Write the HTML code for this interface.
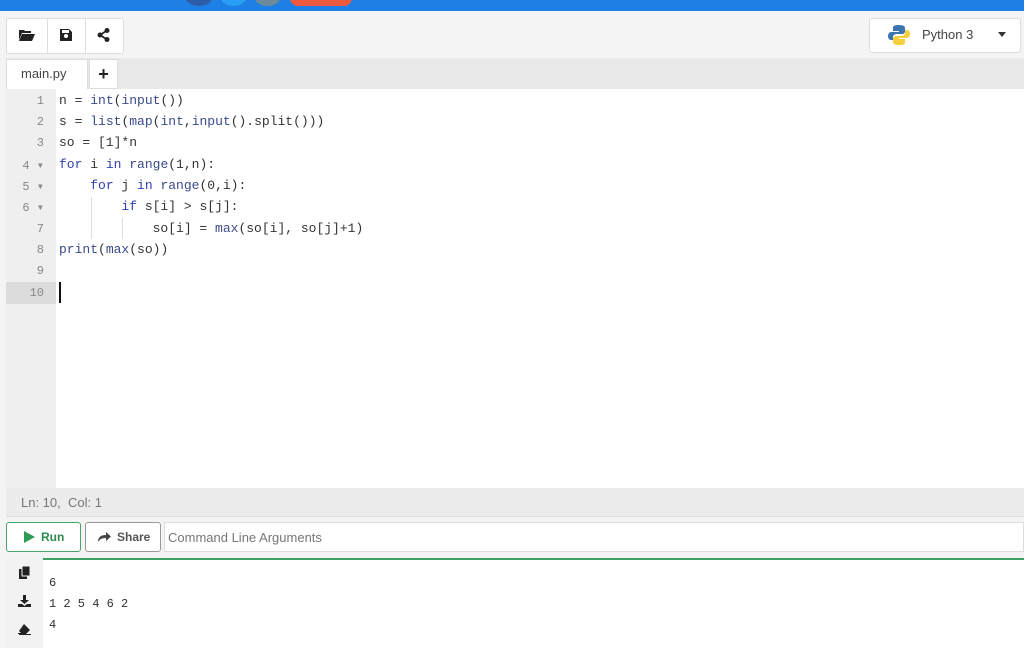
<!DOCTYPE html>
<html><head><style>
body{margin:0;width:1024px;height:648px;overflow:hidden;background:#f4f4f4;font-family:"Liberation Sans",sans-serif;position:relative}
.a{position:absolute}
.top{left:0;top:0;width:1024px;height:11px;background:#1e7fe6}
.tb{top:18px;height:34px;background:#fff;border:1px solid #ddd;border-radius:3px}
.code{font-family:"Liberation Mono",monospace;font-size:13px;color:#333}
.ln{position:absolute;left:6px;width:38px;text-align:right;font-family:"Liberation Mono",monospace;font-size:12px;color:#888}
.cl{position:absolute;left:59px;white-space:pre}
.k{color:#2f3fb0}.f{color:#3a4a8a}
</style></head><body>
<div class="a top"></div>
<div class="a" style="left:185px;top:-14px;width:28px;height:20px;border-radius:50%;background:#2d5ca8"></div>
<div class="a" style="left:220px;top:-14px;width:27px;height:20px;border-radius:50%;background:#2a9df4"></div>
<div class="a" style="left:254px;top:-14px;width:27px;height:20px;border-radius:50%;background:#6b8a9a"></div>
<div class="a" style="left:290px;top:-10px;width:62px;height:16px;border-radius:8px;background:#ee5a40"></div>

<div class="a tb" style="left:6px;width:116px"></div>
<div class="a" style="left:47px;top:19px;width:1px;height:34px;background:#ddd"></div>
<div class="a" style="left:85px;top:19px;width:1px;height:34px;background:#ddd"></div>
<svg class="a" style="left:19px;top:29px" width="16" height="12" viewBox="0 0 16 12"><path d="M0 1h5l1 1h6v2H3L0 11z M3 5h13l-3 7H0z" fill="#222"/></svg>
<svg class="a" style="left:60px;top:29px" width="12" height="12" viewBox="0 0 12 12"><path d="M0 0h9l3 3v9H0z M2 1v3h7V1z M4 7a2 2 0 1 0 4 0a2 2 0 1 0-4 0z" fill="#222" fill-rule="evenodd"/></svg>
<svg class="a" style="left:97px;top:28px" width="13" height="14" viewBox="0 0 13 14"><circle cx="10" cy="2.5" r="2.5" fill="#222"/><circle cx="3" cy="7" r="2.5" fill="#222"/><circle cx="10" cy="11.5" r="2.5" fill="#222"/><path d="M10 2.5L3 7l7 4.5" stroke="#222" stroke-width="1.8" fill="none"/></svg>

<div class="a tb" style="left:869px;top:18px;width:150px;height:33px"></div>
<svg class="a" style="left:888px;top:24px" width="22" height="22" viewBox="0 0 22 22"><path d="M10 1c-5 0-5 2-5 3v3h6v1H3c-2 0-3 2-3 4s1 4 3 4h2v-3c0-2 2-3 4-3h5c2 0 3-1 3-3V4c0-2-2-3-7-3z" fill="#3b75b0"/><path d="M12 21c5 0 5-2 5-3v-3h-6v-1h8c2 0 3-2 3-4s-1-4-3-4h-2v3c0 2-2 3-4 3H8c-2 0-3 1-3 3v3c0 2 2 3 7 3z" fill="#f5cf3d"/></svg>
<div class="a" style="left:922px;top:27px;font-size:13px;color:#444">Python 3</div>
<div class="a" style="left:998px;top:32px;border:4px solid transparent;border-top:5px solid #333;border-bottom:0"></div>

<div class="a" style="left:6px;top:58px;width:1018px;height:31px;background:#e9e9e9"></div>
<div class="a" style="left:6px;top:59px;width:82px;height:30px;background:#fff;border:1px solid #ddd;border-bottom:0;box-sizing:border-box"></div>
<div class="a" style="left:21px;top:66px;font-size:13px;color:#444">main.py</div>
<div class="a" style="left:89px;top:59px;width:29px;height:30px;background:#fff;border:1px solid #ddd;box-sizing:border-box;text-align:center;font-size:18px;font-weight:bold;line-height:28px;color:#222">+</div>

<div class="a" style="left:6px;top:89px;width:1018px;height:399px;background:#fff"></div>
<div class="a" style="left:6px;top:89px;width:50px;height:399px;background:#efefef"></div>
<div class="a" style="left:6px;top:282px;width:50px;height:22px;background:#dcdcdc"></div>
<div class="a" style="left:91px;top:197px;width:1px;height:42px;background:#ddd"></div>
<div class="a" style="left:122px;top:218px;width:1px;height:21px;background:#ddd"></div>
<div class="a" style="left:59px;top:282px;width:2px;height:21px;background:#111"></div>
<div class="code">
<div class="ln" style="top:94px">1</div><div class="cl" style="top:93px">n = <span class="f">int</span>(<span class="f">input</span>())</div>
<div class="ln" style="top:115px">2</div><div class="cl" style="top:114px">s = <span class="f">list</span>(<span class="f">map</span>(<span class="f">int</span>,<span class="f">input</span>().split()))</div>
<div class="ln" style="top:136px">3</div><div class="cl" style="top:135px">so = [1]*n</div>
<div class="ln" style="top:158px">4 ▾</div><div class="cl" style="top:157px"><span class="k">for</span> i <span class="k">in</span> <span class="f">range</span>(1,n):</div>
<div class="ln" style="top:179px">5 ▾</div><div class="cl" style="top:178px">    <span class="k">for</span> j <span class="k">in</span> <span class="f">range</span>(0,i):</div>
<div class="ln" style="top:200px">6 ▾</div><div class="cl" style="top:199px">        <span class="k">if</span> s[i] &gt; s[j]:</div>
<div class="ln" style="top:222px">7</div><div class="cl" style="top:221px">            so[i] = <span class="f">max</span>(so[i], so[j]+1)</div>
<div class="ln" style="top:243px">8</div><div class="cl" style="top:242px"><span class="f">print</span>(<span class="f">max</span>(so))</div>
<div class="ln" style="top:264px">9</div>
<div class="ln" style="top:286px">10</div>
</div>

<div class="a" style="left:6px;top:488px;width:1018px;height:28px;background:#ececec;border-bottom:1px solid #ddd"></div>
<div class="a" style="left:21px;top:495px;font-size:13px;color:#777">Ln: 10,&nbsp; Col: 1</div>

<div class="a" style="left:6px;top:522px;width:75px;height:30px;background:#fff;border:1px solid #4aa36a;border-radius:3px;box-sizing:border-box"></div>
<svg class="a" style="left:24px;top:531px" width="11" height="12"><path d="M0 0L11 6L0 12z" fill="#2e9a55"/></svg>
<div class="a" style="left:41px;top:530px;font-size:12px;font-weight:bold;color:#2e8a50">Run</div>
<div class="a" style="left:85px;top:522px;width:76px;height:30px;background:#fff;border:1px solid #999;border-radius:3px;box-sizing:border-box"></div>
<svg class="a" style="left:98px;top:532px" width="13" height="11"><path d="M8 0l5 4.5L8 9V6C4 6 2 7 0 10c0-5 3-7 8-7z" fill="#444"/></svg>
<div class="a" style="left:117px;top:530px;font-size:12px;font-weight:bold;color:#555">Share</div>
<div class="a" style="left:164px;top:522px;width:860px;height:30px;background:#fff;border:1px solid #ddd;box-sizing:border-box"></div>
<div class="a" style="left:168px;top:530px;font-size:13px;color:#777">Command Line Arguments</div>

<div class="a" style="left:6px;top:558px;width:37px;height:90px;background:#f2f2f2"></div>
<div class="a" style="left:43px;top:558px;width:981px;height:90px;background:#fff;border-top:2px solid #3aa065;box-sizing:border-box"></div>
<svg class="a" style="left:19px;top:566px" width="12" height="13"><rect x="0" y="3" width="8" height="10" fill="#222"/><rect x="3" y="0" width="8" height="10" fill="#222" stroke="#f2f2f2"/></svg>
<svg class="a" style="left:18px;top:595px" width="13" height="12"><path d="M5 0h3v5h3L6.5 9 2 5h3z M0 9h4l2.5 2 2.5-2h4v3H0z" fill="#222"/></svg>
<svg class="a" style="left:18px;top:624px" width="13" height="11"><path d="M6 0l6 6-4 4H0v-1h3L1 7z M1 10h12v1H1z" fill="#222"/></svg>
<div class="a code" style="left:49px;top:573px;font-size:12px;line-height:21px;white-space:pre">6
1 2 5 4 6 2
4</div>
</body></html>
